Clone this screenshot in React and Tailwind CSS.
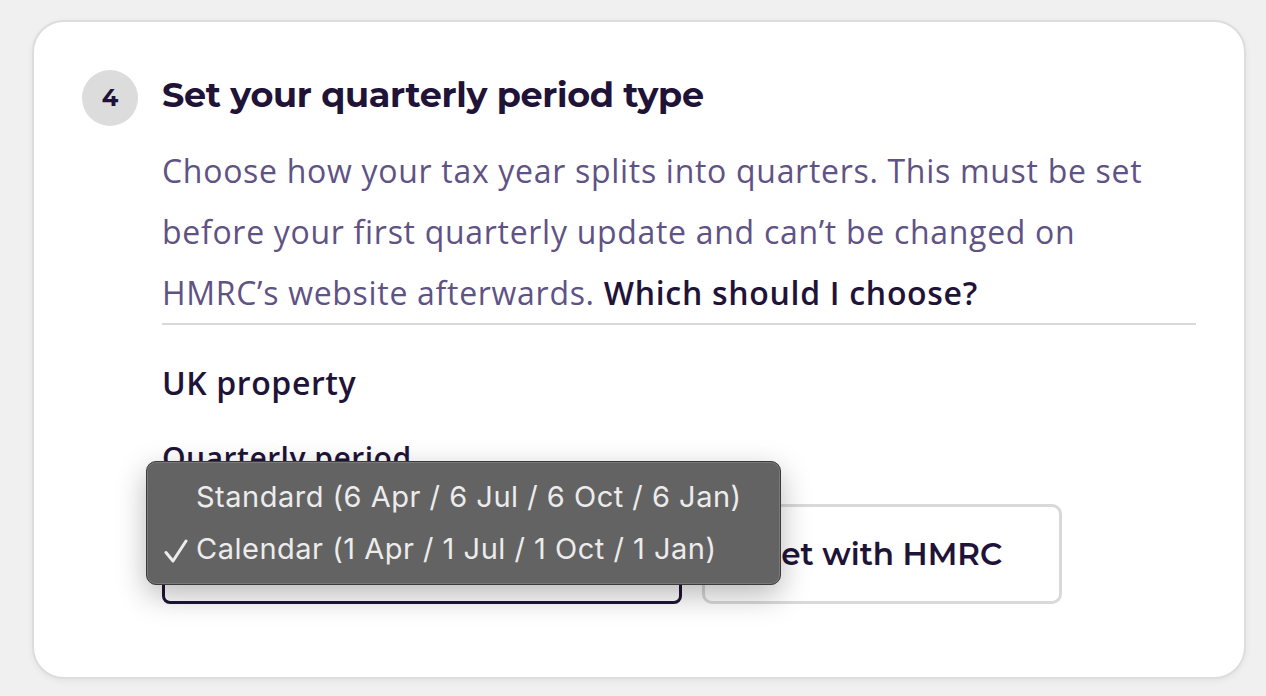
import { useState } from 'react'

const OPTIONS = [
  { value: 'standard', label: 'Standard (6 Apr / 6 Jul / 6 Oct / 6 Jan)' },
  { value: 'calendar', label: 'Calendar (1 Apr / 1 Jul / 1 Oct / 1 Jan)' },
]

const heading = { fontFamily: 'Montserrat, Inter, sans-serif' }
const body = { fontFamily: '"Source Sans Pro", "Open Sans", sans-serif' }

function Check() {
  return (
    <svg width="24" height="24" viewBox="0 0 24 24" fill="none" stroke="#ececec" strokeWidth="3" strokeLinecap="round" strokeLinejoin="round">
      <path d="M2 13.5 L9 22 L22 2" />
    </svg>
  )
}

export default function App() {
  const [period] = useState('calendar')

  return (
    <div className="min-h-screen bg-[#f1f0f0] pl-8 pr-5 pt-5 pb-5">
      <div className="rounded-[32px] border-2 border-[#dedddd] bg-white px-12 pt-12 pb-[73px] shadow-[0_2px_6px_rgba(0,0,0,0.06)]">
        <div className="flex gap-6">
          {/* Step number */}
          <div
            className="flex h-14 w-14 shrink-0 items-center justify-center rounded-full bg-[#dcdcdc] text-[24px] font-bold text-[#1f1437]"
            style={heading}
          >
            4
          </div>

          <div className="flex-1">
            <h2 className="mt-[5px] text-[35px] leading-[40px] font-bold tracking-[-0.3px] text-[#1f1437]" style={heading}>
              Set your quarterly period type
            </h2>

            <p className="mt-[25px] text-[32px] leading-[61px] tracking-[0.7px] text-[#5f5385]" style={body}>
              Choose how your tax year splits into quarters. This must be set<br />
              before your first quarterly update and can’t be changed on<br />
              HMRC’s website afterwards.{' '}
              <a className="font-semibold text-[#1f1437]">Which should I choose?</a>
            </p>
            <div className="h-[2px] bg-[#d9d9d9]" />

            <h3 className="mt-[38px] text-[32px] leading-[40px] font-semibold tracking-[0.6px] text-[#1f1437]" style={body}>
              UK property
            </h3>

            <label className="mt-[37px] block text-[30px] leading-[36px] font-semibold tracking-[0.5px] text-[#1f1437]" style={body}>
              Quarterly period
            </label>

            <div className="mt-[28px] flex gap-5">
              {/* Select with its open menu */}
              <div className="relative h-[100px] w-[520px] rounded-[8px] border-[3px] border-[#1f1437] bg-white">
                <div
                  className="absolute -left-[19px] -top-[46px] z-10 w-[635px] rounded-[10px] border border-[#3c3b3b] bg-[#646363] py-[9px] shadow-[0_10px_30px_rgba(0,0,0,0.28)] ring-1 ring-inset ring-[#7a7979]"
                  style={{ fontFamily: 'Inter, "Liberation Sans", sans-serif' }}
                >
                  {OPTIONS.map(o => (
                    <div key={o.value} className="flex h-[52px] items-center text-[29px] text-[#ececec]">
                      <span className="flex w-[49px] shrink-0 pl-[17px] pt-[4px]">
                        {period === o.value && <Check />}
                      </span>
                      <span className="tracking-[0.5px]">{o.label}</span>
                    </div>
                  ))}
                </div>
              </div>

              <button
                className="h-[100px] w-[360px] rounded-[10px] border-[3px] border-[#d9d9d9] bg-white text-[31px] font-semibold text-[#1f1437]"
                style={heading}
              >
                Set with HMRC
              </button>
            </div>
          </div>
        </div>
      </div>
    </div>
  )
}
